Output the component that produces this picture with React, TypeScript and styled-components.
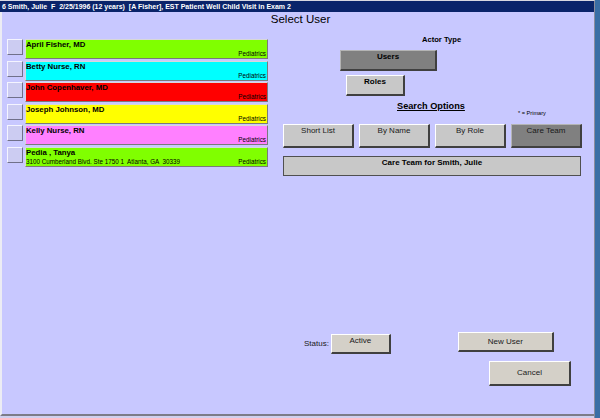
import React from 'react'
import styled, { createGlobalStyle } from 'styled-components'

const GlobalStyle = createGlobalStyle`
  html, body {
    margin: 0;
    padding: 0;
    background: #3a6ea5;
  }
  * {
    box-sizing: border-box;
  }
`

const Frame = styled.div`
  width: 600px;
  height: 418px;
  display: flex;
  background: #3a6ea5;
  font-family: "Liberation Sans", Arial, sans-serif;
  overflow: hidden;
`

const Window = styled.div`
  width: 595px;
  height: 418px;
  display: flex;
  flex-direction: column;
  border-top: 1px solid #d8d8e0;
  border-right: 1px solid #8c8c9c;
  background: #d0d0ee;
  padding-bottom: 2px;
`

const TitleBar = styled.div`
  height: 11px;
  background: #0a246a;
  color: #ffffff;
  font-size: 7px;
  font-weight: bold;
  line-height: 11px;
  padding-left: 2px;
  white-space: pre;
  overflow: hidden;
`

const Body = styled.div`
  flex: 1;
  display: flex;
  flex-direction: column;
  background: #c8c8ff;
  border-left: 2px solid #ececf4;
  border-bottom: 2px solid #7c7c88;
  padding: 0 0 0 5px;
`

const Heading = styled.div`
  text-align: center;
  font-size: 11.5px;
  line-height: 13px;
  margin-top: 1px;
  color: #000;
`

const Columns = styled.div`
  flex: 1;
  display: flex;
  gap: 15px;
  padding-top: 13px;
`

const UserList = styled.div`
  width: 261px;
  display: flex;
  flex-direction: column;
  gap: 1.6px;
`

const Row = styled.div`
  display: flex;
  align-items: flex-start;
  gap: 2px;
`

const PickButton = styled.div`
  width: 16px;
  height: 16px;
  background: #ccccf2;
  border-top: 1px solid #f4f4ff;
  border-left: 1px solid #f4f4ff;
  border-bottom: 1px solid #70708a;
  border-right: 1px solid #70708a;
`

const UserBar = styled.div<{ $color: string }>`
  width: 244px;
  height: 20px;
  background: ${(p) => p.$color};
  border-top: 1px solid #d8d8d8;
  border-left: 1px solid #d8d8d8;
  border-bottom: 1px solid #7a7a7a;
  border-right: 1px solid #7a7a7a;
  display: flex;
  flex-direction: column;
  justify-content: space-between;
  padding: 0 1px 0 0;
`

const UserName = styled.div`
  font-size: 7.8px;
  font-weight: bold;
  line-height: 10px;
  color: #000;
  white-space: pre;
`

const UserMeta = styled.div`
  display: flex;
  justify-content: space-between;
  font-size: 6.3px;
  line-height: 8px;
  color: #000;
  white-space: pre;
`

const Panel = styled.div`
  width: 299px;
  display: flex;
  flex-direction: column;
  padding-bottom: 28px;
`

const Caption = styled.div`
  font-size: 7.6px;
  font-weight: bold;
  line-height: 9px;
  margin: -4px 0 0 139px;
`

const WinButton = styled.div<{ $pressed?: boolean; $w: number; $h: number; $bold?: boolean; $center?: boolean }>`
  width: ${(p) => p.$w}px;
  height: ${(p) => p.$h}px;
  background: ${(p) => (p.$pressed ? '#808080' : '#d4d0c8')};
  border-top: 1px solid ${(p) => (p.$pressed ? '#b4b4b4' : '#ffffff')};
  border-left: 1px solid ${(p) => (p.$pressed ? '#b4b4b4' : '#ffffff')};
  border-bottom: 2px solid #404040;
  border-right: 2px solid #404040;
  font-size: 8px;
  font-weight: ${(p) => (p.$bold ? 'bold' : 'normal')};
  color: ${(p) => (p.$bold ? '#000' : '#1a1a1a')};
  line-height: ${(p) => (p.$center ? `${p.$h - 3}px` : '9px')};
  text-align: center;
  padding-top: ${(p) => (p.$center ? '0' : '1px')};
  flex-shrink: 0;
`

const SearchButton = styled(WinButton)`
  background: ${(p) => (p.$pressed ? '#808080' : '#c8c8c8')};
`

const UsersButton = styled(WinButton)`
  margin: 6px 0 0 57px;
`

const RolesButton = styled(WinButton)`
  background: #c8c8c8;
  margin: 4px 0 0 63px;
`

const SearchTitle = styled.div`
  font-size: 9.2px;
  font-weight: bold;
  text-decoration: underline;
  line-height: 10px;
  margin: 5px 0 0 114px;
`

const PrimaryNote = styled.div`
  font-size: 5.6px;
  line-height: 6px;
  margin: -1px 0 0 235px;
`

const SearchRow = styled.div`
  display: flex;
  gap: 5px;
  margin-top: 8px;
`

const TeamBar = styled.div`
  width: 298px;
  height: 20px;
  margin-top: 8px;
  background: #c8c8c8;
  border: 1px solid #505050;
  font-size: 8px;
  font-weight: bold;
  text-align: center;
  line-height: 9px;
  padding-top: 1px;
`

const Footer = styled.div`
  margin-top: auto;
  display: flex;
  flex-direction: column;
  align-items: flex-start;
`

const StatusRow = styled.div`
  display: flex;
  align-items: flex-start;
`

const StatusLabel = styled.div`
  font-size: 8px;
  line-height: 9px;
  margin: 5px 2px 0 21px;
  color: #1a1a1a;
`

const NewUserButton = styled(WinButton)`
  margin: -2px 0 0 67px;
`

const CancelButton = styled(WinButton)`
  margin: 7px 0 0 206px;
`

const users = [
  { name: 'April Fisher, MD', color: '#80ff00', address: '' },
  { name: 'Betty Nurse, RN', color: '#00ffff', address: '' },
  { name: 'John Copenhaver, MD', color: '#ff0000', address: '' },
  { name: 'Joseph Johnson, MD', color: '#ffff00', address: '' },
  { name: 'Kelly Nurse, RN', color: '#ff80ff', address: '' },
  { name: 'Pedia , Tanya', color: '#80ff00', address: '3100 Cumberland Blvd. Ste 1750 1  Atlanta, GA  30339' },
]

const searchOptions = ['Short List', 'By Name', 'By Role', 'Care Team']

export default function App() {
  return (
    <Frame>
      <GlobalStyle />
      <Window>
        <TitleBar>6 Smith, Julie  F  2/25/1996 (12 years)  [A Fisher], EST Patient Well Child Visit in Exam 2</TitleBar>
        <Body>
          <Heading>Select User</Heading>
          <Columns>
            <UserList>
              {users.map((u) => (
                <Row key={u.name}>
                  <PickButton />
                  <UserBar $color={u.color}>
                    <UserName>{u.name}</UserName>
                    <UserMeta>
                      <span>{u.address}</span>
                      <span>Pediatrics</span>
                    </UserMeta>
                  </UserBar>
                </Row>
              ))}
            </UserList>
            <Panel>
              <Caption>Actor Type</Caption>
              <UsersButton $w={97} $h={21} $pressed $bold>Users</UsersButton>
              <RolesButton $w={59} $h={21} $bold>Roles</RolesButton>
              <SearchTitle>Search Options</SearchTitle>
              <PrimaryNote>* = Primary</PrimaryNote>
              <SearchRow>
                {searchOptions.map((s) => (
                  <SearchButton key={s} $w={71} $h={24} $pressed={s === 'Care Team'}>
                    {s}
                  </SearchButton>
                ))}
              </SearchRow>
              <TeamBar>Care Team for Smith, Julie</TeamBar>
              <Footer>
                <StatusRow>
                  <StatusLabel>Status:</StatusLabel>
                  <WinButton $w={60} $h={20}>Active</WinButton>
                  <NewUserButton $w={96} $h={20} $center>New User</NewUserButton>
                </StatusRow>
                <CancelButton $w={82} $h={25} $center>Cancel</CancelButton>
              </Footer>
            </Panel>
          </Columns>
        </Body>
      </Window>
    </Frame>
  )
}
